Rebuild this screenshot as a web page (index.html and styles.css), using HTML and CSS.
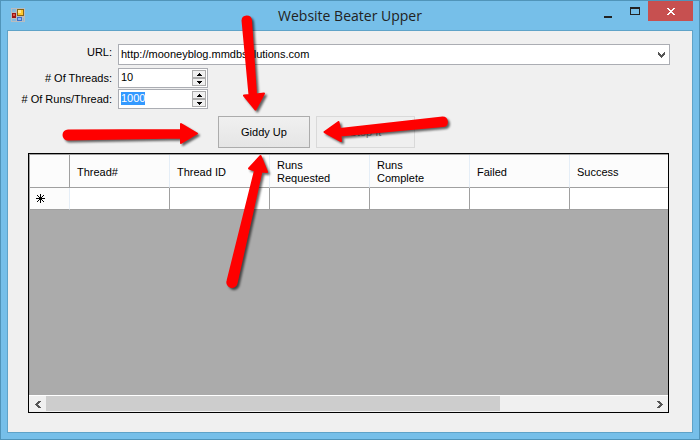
FILE: index.html
```html
<!DOCTYPE html>
<html lang="en">
<head>
<meta charset="utf-8">
<title>Website Beater Upper</title>
<link rel="stylesheet" href="styles.css">
</head>
<body>
<div class="window">
  <header class="titlebar">
    <svg class="app-icon" width="14" height="14" viewBox="0 0 14 14" shape-rendering="crispEdges" aria-hidden="true">
      <path d="M0 0h14v14H0z" fill="#b9bcc0"/>
      <path d="M1 1h4v3H1zM1 11h4v2H1zM12 10h1v3h-1z" fill="#86b9da"/>
      <path d="M6 1h7v7H6z" fill="#8a6410"/><path d="M7 2h5v5H7z" fill="#ffc92e"/><path d="M7 2h3v3H7z" fill="#ffe588"/>
      <path d="M1 5h4v5H1z" fill="#9c1414"/><path d="M2 6h2v2H2z" fill="#dc5a48"/>
      <path d="M6 9h5v4H6z" fill="#3b70cc"/><path d="M7 10h3v2H7z" fill="#8db7f2"/>
    </svg>
    <h1 class="title">Website Beater Upper</h1>
    <div class="caption">
      <button class="cap" type="button" aria-label="Minimize"><svg width="8" height="8" viewBox="0 0 8 8"><path d="M0 6h8v2H0z" fill="#222"/></svg></button>
      <button class="cap" type="button" aria-label="Maximize"><svg width="10" height="8" viewBox="0 0 10 8"><path fill-rule="evenodd" d="M0 0h10v8H0zM1 2v5h8V2z" fill="#222"/></svg></button>
      <button class="cap close" type="button" aria-label="Close"><svg width="8" height="7" viewBox="0 0 8 7" shape-rendering="crispEdges"><path d="M0 0h2v1h1v1h2V1h1V0h2v1H7v1H6v1H5v1h1v1h1v1h1v1H6V6H5V5H3v1H2v1H0V6h1V5h1V4h1V3H2V2H1V1H0z" fill="#fff"/></svg></button>
    </div>
  </header>
  <main class="client">
    <form class="fields">
      <label class="url-label" for="url">URL:</label>
      <div class="combo">
        <select id="url"><option>http://mooneyblog.mmdbsolutions.com</option></select>
        <svg class="chevron" width="7" height="6" viewBox="0 0 7 6" shape-rendering="crispEdges"><path d="M0 0h1v1h1v1h1v1h1V2h1V1h1V0h1v3H6v1H5v1H4v1H3V5H2V4H1V3H0z" fill="#555"/></svg>
      </div>
      <label for="threads">#&nbsp;Of Threads:</label>
      <div class="spinner">
        <input id="threads" type="number" value="10">
        <div class="steps">
          <button type="button" aria-label="More threads"><svg width="5" height="3" viewBox="0 0 5 3" shape-rendering="crispEdges"><path d="M2 0h1v1h1v1h1v1H0V2h1V1h1z"/></svg></button>
          <button type="button" aria-label="Fewer threads"><svg width="5" height="3" viewBox="0 0 5 3" shape-rendering="crispEdges"><path d="M0 0h5v1H4v1H3v1H2V2H1V1H0z"/></svg></button>
        </div>
      </div>
      <label for="runs"># Of Runs/Thread:</label>
      <div class="spinner">
        <input id="runs" type="number" value="1000">
        <div class="steps">
          <button type="button" aria-label="More runs"><svg width="5" height="3" viewBox="0 0 5 3" shape-rendering="crispEdges"><path d="M2 0h1v1h1v1h1v1H0V2h1V1h1z"/></svg></button>
          <button type="button" aria-label="Fewer runs"><svg width="5" height="3" viewBox="0 0 5 3" shape-rendering="crispEdges"><path d="M0 0h5v1H4v1H3v1H2V2H1V1H0z"/></svg></button>
        </div>
      </div>
    </form>
    <div class="actions">
      <button class="action go" type="button">Giddy Up</button>
      <button class="action stop" type="button" disabled>Stop It</button>
    </div>
    <section class="grid">
      <div class="viewport">
        <table>
          <thead>
            <tr><th class="row-head"></th><th>Thread#</th><th>Thread ID</th><th>Runs<br>Requested</th><th>Runs<br>Complete</th><th>Failed</th><th>Success</th></tr>
          </thead>
          <tbody>
            <tr><th class="row-head"><svg width="9" height="9" viewBox="0 0 9 9"><path d="M4.500 0v9M0 4.500h9M1 1l7 7M8 1L1 8" stroke="#000"/></svg></th><td></td><td></td><td></td><td></td><td></td><td></td></tr>
          </tbody>
        </table>
      </div>
      <div class="scrollbar">
        <button type="button" aria-label="Scroll left"><svg width="6" height="7" viewBox="0 0 6 7" shape-rendering="crispEdges"><path d="M6 0v1H5v1H4v1H3v1h1v1h1v1h1v1H3V6H2V5H1V4H0V3h1V2h1V1h1V0z" fill="#555"/></svg></button>
        <div class="track"><div class="thumb"></div></div>
        <button type="button" aria-label="Scroll right"><svg width="6" height="7" viewBox="0 0 6 7" shape-rendering="crispEdges"><path d="M0 0v1h1v1h1v1h1v1H2v1H1v1H0v1h3V6h1V5h1V4h1V3H5V2H4V1H3V0z" fill="#555"/></svg></button>
      </div>
    </section>
  </main>
  <svg class="arrows" width="700" height="440" viewBox="0 0 700 440" aria-hidden="true">
    <g fill="#f00" stroke="#f00" stroke-width="2" stroke-linejoin="round">
      <path d="M68 130.500L181 130V124L197 133.500 181 143V137.500L68 139.500A4.500 4.500 0 0 1 68 130.500z"/>
      <path d="M251 20L256 94.500 264 93.500 255.500 109.500 244 95.500 249.500 95 242.500 20.500A4.300 4.300 0 0 1 251 20z"/>
      <path d="M442.500 117.500L340 129 338.500 122 324.500 132 341 141 340.500 135.500 443.500 126A4.300 4.300 0 0 0 442.500 117.500z"/>
      <path d="M227.500 281L255 170.500 249 168.500 260.500 156 267 172 261.500 171.500 236.500 283.500A4.500 4.500 0 0 1 227.500 281z"/>
    </g>
  </svg>
</div>
<script src="main.js"></script>
</body>
</html>
```
FILE: styles.css
```css
* { box-sizing: border-box; }
body {
  margin: 0;
  font: 11px/13px "Liberation Sans", Arial, sans-serif;
  color: #000;
}
button, input, select { font: inherit; color: inherit; margin: 0; padding: 0; border: 0; border-radius: 0; }
svg { display: block; }

.window {
  position: relative;
  display: flex;
  flex-direction: column;
  height: 100vh;
  min-height: 300px;
  overflow: hidden;
  border: 1px solid #5094b9;
  background: #76bfe9;
}
.titlebar {
  display: grid;
  grid-template-columns: 1fr auto 1fr;
  height: 29px;
  padding: 0 6px 0 10px;
}
.app-icon { margin-top: 7px; }
.title {
  margin: 0 4px 0 0;
  font: 14px/30px "Open Sans", "Noto Sans", sans-serif;
  color: #222;
}
.caption { display: flex; justify-content: flex-end; height: 20px; }
.cap { display: flex; align-items: center; justify-content: center; width: 27px; background: none; }
.cap:first-child { padding-top: 5px; }
.close { width: 45px; background: #c75050; }

.client {
  flex: 1;
  min-height: 0;
  display: flex;
  flex-direction: column;
  margin: 0 6px 6px;
  padding: 13px 22px 19px 20px;
  border: 1px solid #5fa3c8;
  background: #f0f0f0;
}
.fields { display: grid; grid-template-columns: 84px 1fr; column-gap: 6px; }
.fields label { justify-self: end; align-self: center; white-space: nowrap; }
.fields .url-label { align-self: start; padding-top: 2px; }
.combo {
  position: relative;
  height: 21px;
  margin-bottom: 3px;
  border: 1px solid #abadb3;
  background: #fff;
}
.combo select { display: block; width: 100%; height: 100%; padding: 0 2px; appearance: none; background: none; outline: none; }
.chevron { position: absolute; right: 4px; top: 7px; pointer-events: none; }
.spinner {
  display: flex;
  width: 90px;
  height: 20px;
  margin-bottom: 1px;
  padding: 1px;
  border: 1px solid #abadb3;
  background: #fff;
}
.spinner input { flex: 1; min-width: 0; padding: 0 0 1px 1px; appearance: textfield; background: none; outline: none; }
.spinner input::-webkit-inner-spin-button { appearance: none; margin: 0; }
.spinner input::selection { background: #39f; color: #fff; }
.steps { display: flex; flex-direction: column; width: 14px; }
.steps button {
  flex: 1;
  display: flex;
  align-items: center;
  justify-content: center;
  border: 1px solid #acacac;
  background: #f0f0f0;
}

.actions { display: flex; gap: 6px; height: 32px; margin: 6px 0 5px 190px; }
.action { border: 1px solid #acacac; background: linear-gradient(#f0f0f0, #e5e5e5); }
.go { width: 92px; }
.stop { width: 99px; border-color: #d9d9d9; background: #efefef; color: #838383; }

.grid {
  flex: 1;
  min-height: 0;
  display: flex;
  flex-direction: column;
  margin-right: 1px;
  border: 1px solid #000;
  background: #ababab;
}
.viewport { flex: 1; min-height: 0; overflow: hidden; border: 1px solid #a0a0a0; border-width: 1px 0 0 1px; }
table { width: 640px; table-layout: fixed; border-collapse: separate; border-spacing: 0; }
th, td { padding: 0; border: 1px solid #a0a0a0; border-width: 0 1px 1px 0; background: #fff; }
thead th { height: 33px; padding: 2px 0 0 7px; border-right-color: #e5eef7; background: #fcfcfc; font-weight: normal; text-align: left; }
tbody th, td { height: 22px; }
thead .row-head, tbody .row-head { width: 40px; background: #fcfcfc; }
thead .row-head { border-right-color: #a0a0a0; }
tbody .row-head { padding-left: 6px; border-right-color: #e5eef7; }
.scrollbar { display: flex; height: 17px; border-top: 1px solid #fff; background: #f0f0f0; }
.scrollbar button { display: flex; align-items: center; justify-content: center; width: 17px; background: none; }
.track { flex: 1; padding-bottom: 1px; }
.thumb { width: 75%; height: 100%; background: #cdcdcd; }

.arrows { position: absolute; left: -1px; top: -1px; pointer-events: none; filter: drop-shadow(2px 2px 1px rgba(0, 0, 0, 0.6)); }
```
FILE: main.js
```js
const runs = document.getElementById("runs");
runs.focus();
runs.select();
```
